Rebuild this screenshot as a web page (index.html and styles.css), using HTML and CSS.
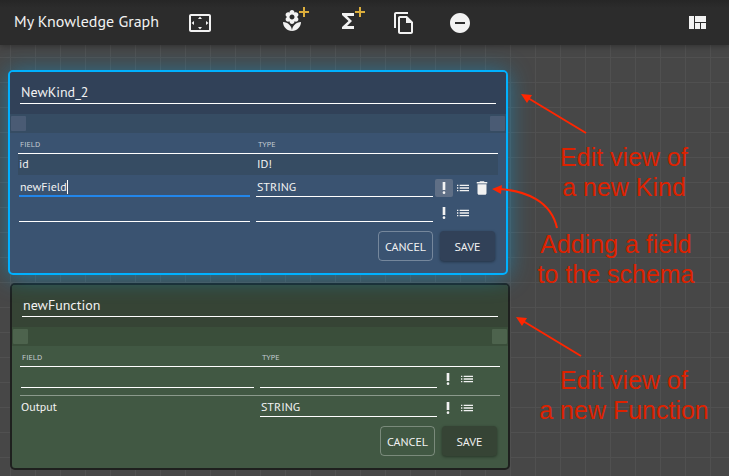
FILE: index.html
```html
<!DOCTYPE html>
<html lang="en">
<head>
<meta charset="utf-8">
<title>My Knowledge Graph</title>
<link rel="stylesheet" href="styles.css">
</head>
<body>
<svg class="defs" aria-hidden="true">
  <symbol id="i-required" viewBox="0 0 24 24"><circle cx="12" cy="19" r="2"/><path d="M10 3h4v12h-4z"/></symbol>
  <symbol id="i-list" viewBox="0 0 24 24"><path d="M3 13h2v-2H3v2zm0 4h2v-2H3v2zm0-8h2V7H3v2zm4 4h14v-2H7v2zm0 4h14v-2H7v2zM7 7v2h14V7H7z"/></symbol>
  <symbol id="i-delete" viewBox="0 0 24 24"><path d="M6 19c0 1.1.9 2 2 2h8c1.1 0 2-.9 2-2V7H6v12zM19 4h-3.500l-1-1h-5l-1 1H5v2h14V4z"/></symbol>
  <symbol id="i-plus" viewBox="0 0 10 10"><path d="M4 0h2v4h4v2H6v4H4V6H0V4h4z"/></symbol>
</svg>

<header class="toolbar">
  <h1 class="title">My Knowledge Graph</h1>
  <button class="tool" aria-label="Fit to screen"><svg viewBox="0 0 24 24"><path d="M12.010 5.500L10 8h4l-1.990-2.500zM18 10v4l2.500-1.990L18 10zM6 10l-2.500 2.010L6 14v-4zm8 6h-4l2.010 2.500L14 16zm7-13H3c-1.100 0-2 .9-2 2v14c0 1.100.9 2 2 2h18c1.100 0 2-.9 2-2V5c0-1.100-.9-2-2-2zm0 16.010H3V4.990h18v14.020z"/></svg></button>
  <nav class="tools" aria-label="Graph tools">
    <button class="tool tool-add" aria-label="Add kind"><svg viewBox="0 0 24 24"><path d="M12 22c4.970 0 9-4.030 9-9-4.970 0-9 4.030-9 9zM5.600 10.250c0 1.380 1.120 2.500 2.500 2.500.53 0 1.010-.16 1.420-.44l-.02.19c0 1.380 1.120 2.500 2.500 2.500s2.500-1.120 2.500-2.500l-.02-.19c.4.28.89.44 1.420.44 1.380 0 2.500-1.120 2.500-2.500 0-1-.59-1.850-1.430-2.250.84-.4 1.430-1.250 1.430-2.250 0-1.380-1.120-2.500-2.500-2.500-.53 0-1.010.16-1.420.44l.02-.19C14.500 2.120 13.380 1 12 1S9.500 2.120 9.500 3.500l.02.19c-.4-.28-.89-.44-1.420-.44-1.380 0-2.500 1.120-2.500 2.500 0 1 .59 1.850 1.430 2.250-.84.4-1.430 1.250-1.430 2.250zM12 5.500c1.380 0 2.500 1.120 2.500 2.500s-1.120 2.500-2.500 2.500S9.500 9.380 9.500 8s1.120-2.500 2.500-2.500zM3 13c0 4.970 4.030 9 9 9 0-4.970-4.030-9-9-9z"/></svg><svg class="plus"><use href="#i-plus"/></svg></button>
    <button class="tool tool-add" aria-label="Add function"><svg viewBox="0 0 24 24"><path d="M18 4H6v2l6.500 6L6 18v2h12v-3h-7l5-5-5-5h7z"/></svg><svg class="plus"><use href="#i-plus"/></svg></button>
    <button class="tool" aria-label="Copy"><svg viewBox="0 0 24 24"><path fill-rule="evenodd" d="M16 1H4c-1.100 0-2 .9-2 2v14h2V3h12V1zM15 5H8c-1.100 0-2 .9-2 2v14c0 1.100.9 2 2 2h11c1.100 0 2-.9 2-2V11l-6-6zM8 21V7h6v5h5v9H8z"/></svg></button>
    <button class="tool" aria-label="Remove"><svg viewBox="0 0 24 24"><path d="M12 2C6.480 2 2 6.480 2 12s4.480 10 10 10 10-4.480 10-10S17.520 2 12 2zm5 11H7v-2h10v2z"/></svg></button>
  </nav>
  <button class="tool tool-end" aria-label="Layout"><svg viewBox="0 0 24 24"><path d="M10 18h5v-6h-5v6zm-6 0h5V5H4v13zm12 0h5v-6h-5v6zM10 5v6h11V5H10z"/></svg></button>
</header>

<main class="canvas">
  <form class="node kind">
    <div class="node-head"><input class="name" aria-label="Kind name" value="NewKind_2"></div>
    <div class="ports"><span class="port"></span><span class="port"></span></div>
    <table class="fields">
      <colgroup><col class="col-field"><col class="col-type"><col></colgroup>
      <thead><tr><th>FIELD</th><th>TYPE</th><th></th></tr></thead>
      <tbody>
        <tr class="fixed"><td>id</td><td>ID!</td><td></td></tr>
        <tr>
          <td><div class="edit"><input class="cell focused" aria-label="Field name" value="newField"><span class="caret"></span></div></td>
          <td><input class="cell" aria-label="Field type" value="STRING"></td>
          <td><div class="actions">
            <button type="button" class="mini on" aria-label="Required"><svg><use href="#i-required"/></svg></button>
            <button type="button" class="mini" aria-label="List"><svg><use href="#i-list"/></svg></button>
            <button type="button" class="mini trash" aria-label="Delete field"><svg><use href="#i-delete"/></svg></button>
          </div></td>
        </tr>
        <tr>
          <td><div class="edit"><input class="cell" aria-label="New field name"></div></td>
          <td><input class="cell" aria-label="New field type"></td>
          <td><div class="actions">
            <button type="button" class="mini" aria-label="Required"><svg><use href="#i-required"/></svg></button>
            <button type="button" class="mini" aria-label="List"><svg><use href="#i-list"/></svg></button>
          </div></td>
        </tr>
      </tbody>
    </table>
    <div class="buttons"><button type="button" class="btn">CANCEL</button><button type="button" class="btn save">SAVE</button></div>
  </form>

  <form class="node function">
    <div class="node-head"><input class="name" aria-label="Function name" value="newFunction"></div>
    <div class="ports"><span class="port"></span><span class="port"></span></div>
    <table class="fields">
      <colgroup><col class="col-field"><col class="col-type"><col></colgroup>
      <thead><tr><th>FIELD</th><th>TYPE</th><th></th></tr></thead>
      <tbody>
        <tr>
          <td><div class="edit"><input class="cell" aria-label="New argument name"></div></td>
          <td><input class="cell" aria-label="New argument type"></td>
          <td><div class="actions">
            <button type="button" class="mini" aria-label="Required"><svg><use href="#i-required"/></svg></button>
            <button type="button" class="mini" aria-label="List"><svg><use href="#i-list"/></svg></button>
          </div></td>
        </tr>
        <tr class="output">
          <td>Output</td>
          <td><input class="cell" aria-label="Output type" value="STRING"></td>
          <td><div class="actions">
            <button type="button" class="mini" aria-label="Required"><svg><use href="#i-required"/></svg></button>
            <button type="button" class="mini" aria-label="List"><svg><use href="#i-list"/></svg></button>
          </div></td>
        </tr>
      </tbody>
    </table>
    <div class="buttons"><button type="button" class="btn">CANCEL</button><button type="button" class="btn save">SAVE</button></div>
  </form>

  <p class="note note-kind">Edit view of<br>a new Kind</p>
  <p class="note note-field">Adding a field<br>to the schema</p>
  <p class="note note-function">Edit view of<br>a new Function</p>
  <svg class="arrows" viewBox="0 0 240 280" aria-hidden="true">
    <g fill="none" stroke="#ff2600" stroke-width="2">
      <path d="M96 43L38 8"/>
      <path d="M67 138C61 111 36 101 10 99"/>
      <path d="M91 266L33 231"/>
    </g>
    <g fill="#ff2600">
      <path d="M31 4l11 1-5 8z"/>
      <path d="M2 99l10-4-1 9z"/>
      <path d="M26 227l11 1-5 8z"/>
    </g>
  </svg>
</main>
</body>
</html>
```
FILE: styles.css
```css
* { box-sizing: border-box; }

body {
  margin: 0;
  min-height: 100vh;
  display: flex;
  flex-direction: column;
  background: #474747;
  color: #f2f2f2;
  font-family: "PT Sans", "Noto Sans", sans-serif;
}

button, input { font: inherit; color: inherit; }
button { padding: 0; border: 0; background: none; }
svg { display: block; fill: currentColor; }
.defs { position: absolute; width: 0; height: 0; }

.toolbar {
  position: relative;
  z-index: 3;
  display: flex;
  align-items: center;
  height: 45px;
  padding: 0 16px 0 14px;
  background: linear-gradient(#262626, #2c2c2c 8px);
  box-shadow: 0 1px 6px rgba(0, 0, 0, .35);
}
.title { margin: 0 24px 4px 0; min-width: 146px; font-size: 16px; line-height: 20px; font-weight: 400; white-space: nowrap; }
.tools { display: flex; gap: 24px; margin-left: 60px; }
.tool { position: relative; display: grid; place-items: center; width: 32px; height: 42px; }
.tool svg { width: 24px; height: 24px; }
.tool-add { padding-bottom: 4px; }
.tool .plus { position: absolute; top: 5px; right: -1px; width: 10px; height: 10px; color: #dcae3c; }
.tool-end { margin-left: auto; }

.canvas {
  position: relative;
  flex: 1;
  min-height: 431px;
  overflow: hidden;
  background-image:
    linear-gradient(90deg, #505050 1px, transparent 1px),
    linear-gradient(#505050 1px, transparent 1px);
  background-size: 25px 25px;
  background-position: 10px 12px;
}

.node { position: absolute; width: 500px; border: 2px solid #1e201e; border-radius: 5px; font-size: 12px; }
.kind {
  left: 8px;
  top: 25px;
  z-index: 1;
  border-color: #00b1ff;
  background: #3a5371;
  box-shadow: 0 2px 24px rgba(0, 177, 255, .45);
  --head: #314158;
  --bar: #364c63;
  --port: #4a5b74;
  --field: 238px;
}
.function {
  left: 10px;
  top: 238px;
  background: #415843;
  --head: #364435;
  --bar: #3a4e3a;
  --port: #4d634d;
  --field: 240px;
}

.node-head { height: 42px; padding: 0 10px; background: var(--head); border-radius: 3px 3px 0 0; }
.name {
  display: block;
  width: 100%;
  height: 32px;
  padding: 9px 1px 0;
  border: 0;
  border-bottom: 1px solid #fff;
  background: none;
  font-size: 14px;
  outline: 0;
}
.ports { display: flex; justify-content: space-between; padding: 2px 1px; background: var(--bar); }
.port { width: 15px; height: 15px; background: var(--port); border-radius: 1px; }

.fields { width: calc(100% - 16px); margin: 0 8px; border-collapse: separate; border-spacing: 0; table-layout: fixed; }
.col-field { width: var(--field); }
.col-type { width: 177px; }
.fields th { height: 21px; padding: 2px 2px 0; border-bottom: 1px solid #fff; text-align: left; font-size: 8px; line-height: 12px; font-weight: 400; color: #c4ccd2; }
.fields td { padding: 1px 0 3px; vertical-align: bottom; line-height: 14px; }
.fields .fixed td { height: 21px; padding: 0 1px 2px; vertical-align: middle; background: var(--bar); }
.function .fields td { padding: 0 0 7px; }
.function .fields .output td { padding-bottom: 3px; border-top: 1px solid #8b9a8c; }
.function .fields .output td:first-child { padding: 0 1px 2px; vertical-align: middle; }

.edit { position: relative; padding: 0 6px 0 1px; }
.cell {
  display: block;
  width: 100%;
  height: 21px;
  padding: 1px 1px 0;
  border: 0;
  border-bottom: 1px solid #fff;
  border-radius: 0;
  background: none;
  outline: 0;
}
.cell.focused { border-bottom: 2px solid #2286ea; }
.caret { position: absolute; left: 49px; top: 4px; width: 1px; height: 14px; background: #fff; }

.actions { display: flex; gap: 1px; padding-left: 2px; }
.mini { display: grid; place-items: center; width: 18px; height: 18px; border-radius: 2px; }
.mini svg { width: 16px; height: 16px; }
.mini.trash svg { width: 18px; height: 18px; }
.mini.on { background: #5f6f86; }

.buttons { display: flex; justify-content: flex-end; gap: 7px; padding: 6px 11px 12px; }
.btn { width: 55px; height: 30px; border: 1px solid rgba(255, 255, 255, .3); border-radius: 4px; font-size: 12px; }
.btn.save { border: 0; background: var(--head); box-shadow: 0 1px 3px rgba(0, 0, 0, .4); }

.note {
  position: absolute;
  z-index: 2;
  width: 190px;
  margin: 0;
  color: #dd2200;
  font: 25px/30px "Liberation Sans", sans-serif;
  text-align: center;
}
.note-kind { left: 529px; top: 97px; }
.note-field { left: 521px; top: 184px; }
.note-function { left: 529px; top: 320px; }
.arrows { position: absolute; z-index: 2; left: 490px; top: 45px; width: 240px; height: 280px; }
```
